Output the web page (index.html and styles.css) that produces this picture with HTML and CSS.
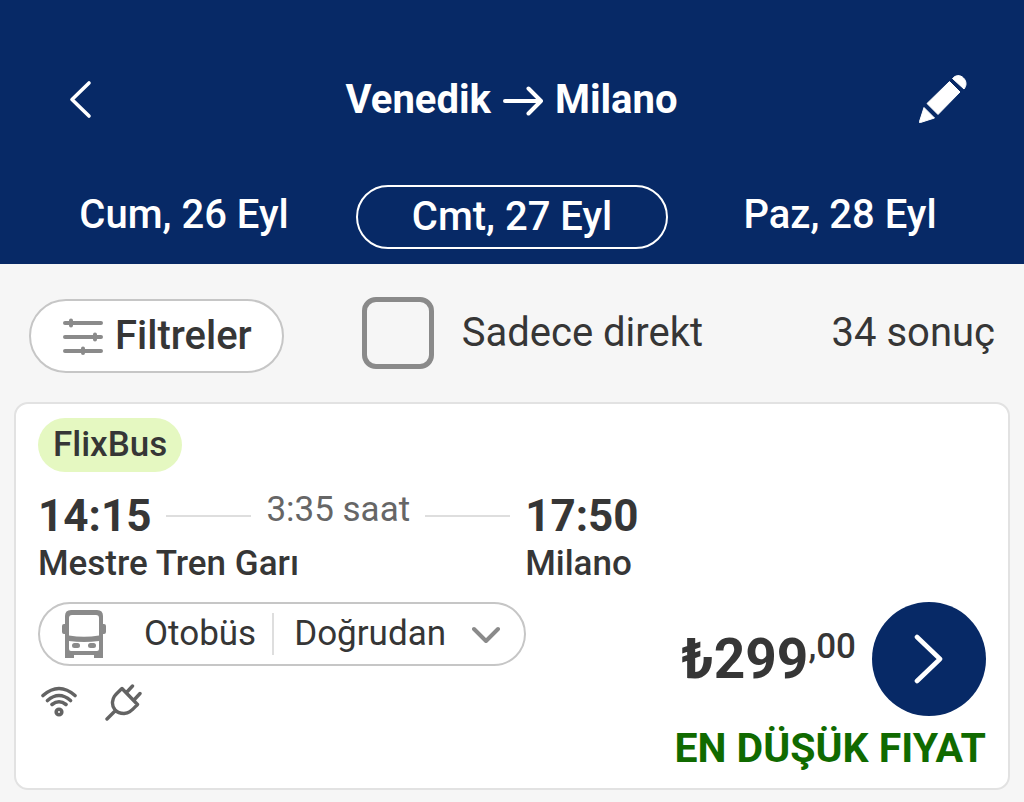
FILE: index.html
```html
<!DOCTYPE html>
<html lang="tr">
<head>
<meta charset="utf-8">
<meta name="viewport" content="width=device-width, initial-scale=1">
<title>Venedik → Milano</title>
<link rel="stylesheet" href="styles.css">
</head>
<body>
<header class="header">
  <div class="header-bar">
    <button class="icon-button" type="button" aria-label="Geri">
      <svg width="24" height="40" viewBox="0 0 24 40" fill="none" stroke="currentColor" stroke-width="3.6" stroke-linecap="round" stroke-linejoin="round"><path d="M20 4 3 20.500 20 37"/></svg>
    </button>
    <h1 class="route">
      <span>Venedik</span>
      <svg class="route-arrow" width="40" height="30" viewBox="0 0 40 30" fill="none" stroke="currentColor" stroke-width="4" stroke-linecap="round" stroke-linejoin="round"><path d="M2 15H38M25.500 2.500 38 15 25.500 27.500"/></svg>
      <span>Milano</span>
    </h1>
    <button class="icon-button icon-button-end" type="button" aria-label="Düzenle">
      <svg width="50" height="50" viewBox="0 0 50 50" fill="currentColor" stroke="currentColor" stroke-width="1" stroke-linejoin="round"><path d="M31.500 7.500 42 18 20 40.500 9 29.500ZM34.500 4.500C37.500 1 42 .5 45.500 4 49 7.500 48.500 12 46 15ZM6 33.500 16.500 44 2.500 48.500Q1 49 1.500 47.500Z"/></svg>
    </button>
  </div>
  <nav class="dates">
    <a class="date" href="#">Cum, 26 Eyl</a>
    <a class="date date-current" href="#" aria-current="date">Cmt, 27 Eyl</a>
    <a class="date" href="#">Paz, 28 Eyl</a>
  </nav>
</header>
<main>
  <div class="toolbar">
    <button class="filters" type="button">
      <svg width="40" height="38" viewBox="0 0 40 38" fill="none" stroke="#8a8a8a" stroke-width="4" stroke-linecap="round"><path d="M2 6H38M2 20H38M2 34H38M8 3.500V8.500M32 17.500V22.500M20 31.500V36"/></svg>
      <span>Filtreler</span>
    </button>
    <label class="direct">
      <input class="direct-box" type="checkbox">
      <span>Sadece direkt</span>
    </label>
    <p class="count">34 sonuç</p>
  </div>
  <article class="card">
    <span class="operator">FlixBus</span>
    <div class="journey">
      <time class="time">14:15</time>
      <span class="line"></span>
      <span class="duration">3:35 saat</span>
      <span class="line"></span>
      <time class="time">17:50</time>
      <span class="station station-from">Mestre Tren Garı</span>
      <span class="station">Milano</span>
    </div>
    <div class="details">
      <div class="service">
        <button class="mode" type="button">
          <svg class="bus" width="44" height="48" viewBox="0 0 44 48" fill="#8a8a8a"><path fill-rule="evenodd" d="M9 0H35Q41 0 41 6V14H42Q44 14 44 16V22Q44 24 42 24H41V48H32V45H12V48H3V24H2Q0 24 0 22V16Q0 14 2 14H3V6Q3 0 9 0ZM10 5Q7 5 7 8V25.500Q22 28 37 25.500V8Q37 5 34 5ZM7 31V39Q7 41 9 41H35Q37 41 37 39V31Q22 33 7 31Z"/><rect x="10" y="33" width="8" height="5" rx="2.500"/><rect x="26" y="33" width="8" height="5" rx="2.500"/></svg>
          <span class="mode-name">Otobüs</span>
          <span class="mode-type">Doğrudan</span>
          <svg width="28" height="18" viewBox="0 0 28 18" fill="none" stroke="#8a8a8a" stroke-width="4" stroke-linecap="round" stroke-linejoin="round"><path d="M2 4 14 16 26 4"/></svg>
        </button>
        <div class="amenities">
          <svg width="38" height="36" viewBox="0 0 38 36" fill="none" stroke="#636363" stroke-width="3.600" stroke-linecap="round" role="img" aria-label="Wi-Fi"><path d="M3 11.500Q19-2.500 35 11.500M7.500 16.500Q19 6.500 30.500 16.500M12 20.500Q19 15 26 20.500"/><circle cx="19" cy="28" r="2.800"/></svg>
          <svg width="38" height="38" viewBox="0 0 38 38" fill="none" stroke="#636363" stroke-width="3.400" stroke-linecap="round" stroke-linejoin="round" role="img" aria-label="Priz"><path d="M3 35 11 27M18 4.500 33.500 20.500C27 27 25.500 29 20 29.500 12 29.500 8 24 8.500 18 9 12 12 10.500 18 4.500ZM22.500 8.500 28.500 2M30 16 36 9.500"/></svg>
        </div>
      </div>
      <div class="offer">
        <div class="buy">
          <strong class="price">₺299<sup class="cents">,00</sup></strong>
          <button class="go" type="button" aria-label="Seç">
            <svg width="30" height="50" viewBox="0 0 30 50" fill="none" stroke="currentColor" stroke-width="4.600" stroke-linecap="round" stroke-linejoin="round"><path d="M3 3 26 25 3 47"/></svg>
          </button>
        </div>
        <p class="lowest">EN DÜŞÜK FIYAT</p>
      </div>
    </div>
  </article>
</main>
</body>
</html>
```
FILE: styles.css
```css
* {
  box-sizing: border-box;
}

body {
  margin: 0;
  background: #f6f6f6;
  color: #363636;
  font-family: Roboto, "Liberation Sans", sans-serif;
  font-size: 40px;
  line-height: 48px;
}

button {
  margin: 0;
  padding: 0;
  border: 0;
  background: none;
  color: inherit;
  font: inherit;
  cursor: pointer;
}

svg {
  display: block;
  flex: none;
}

p {
  margin: 0;
}

.header {
  padding: 65px 20px 15px;
  background: #072966;
  color: #fff;
}

.header-bar {
  display: grid;
  grid-template-columns: 64px 1fr 64px;
  align-items: center;
  height: 68px;
  padding: 0 36px 0 49px;
}

.icon-button {
  display: flex;
  align-items: center;
  height: 68px;
}

.icon-button-end {
  justify-content: flex-end;
}

.route {
  display: flex;
  align-items: center;
  justify-content: center;
  gap: 12px;
  margin: 0;
  padding: 2px 14px 0 0;
  font-size: 40px;
  font-weight: 700;
}

.route-arrow {
  margin-top: 2px;
}

.dates {
  display: grid;
  grid-template-columns: repeat(3, 1fr);
  margin-top: 52px;
}

.date {
  display: flex;
  align-items: center;
  justify-content: center;
  height: 64px;
  margin: 0 8px;
  padding-bottom: 4px;
  color: inherit;
  font-weight: 500;
  text-decoration: none;
}

.date-current {
  padding-bottom: 0;
  border: 2px solid #fff;
  border-radius: 32px;
}

.toolbar {
  display: flex;
  align-items: flex-start;
  padding: 33px 29px 29px;
}

.filters {
  display: flex;
  align-items: center;
  gap: 12px;
  height: 74px;
  margin-top: 2px;
  padding: 0 30px 0 32px;
  border: 2px solid #c6c6c6;
  border-radius: 37px;
  background: #fff;
  font-weight: 500;
}

.direct {
  display: flex;
  align-items: center;
  gap: 28px;
  margin-left: 78px;
}

.direct-box {
  appearance: none;
  width: 72px;
  height: 72px;
  margin: 0;
  border: 5px solid #8a8a8a;
  border-radius: 14px;
}

.direct-box:checked {
  background: #072966;
}

.count {
  margin-left: auto;
  line-height: 72px;
}

.card {
  display: flex;
  flex-direction: column;
  align-items: stretch;
  margin: 0 14px 12px;
  padding: 14px 22px 16px;
  border: 2px solid #e2e2e2;
  border-radius: 14px;
  background: #fff;
  font-size: 35px;
}

.operator {
  align-self: flex-start;
  padding: 0 15px;
  border-radius: 27px;
  background: #e5f8c1;
  font-weight: 500;
  line-height: 54px;
}

.journey {
  display: grid;
  grid-template-columns: repeat(5, max-content);
  align-items: center;
  column-gap: 15px;
  margin-top: 20px;
}

.time {
  font-size: 44px;
  font-weight: 700;
}

.line {
  width: 85px;
  height: 2px;
  background: #dedede;
}

.duration {
  padding-bottom: 12px;
  color: #666;
  line-height: 36px;
}

.station {
  font-weight: 500;
}

.station-from {
  grid-column: span 4;
}

.details {
  display: flex;
  justify-content: space-between;
  margin-top: 14px;
}

.mode {
  display: flex;
  align-items: center;
  height: 64px;
  padding: 0 24px 0 22px;
  border: 2px solid #c6c6c6;
  border-radius: 32px;
}

.bus {
  margin-right: 38px;
}

.mode-name {
  padding-right: 16px;
  border-right: 2px solid #dedede;
  line-height: 42px;
}

.mode-type {
  padding: 0 26px 0 20px;
  line-height: 42px;
}

.amenities {
  display: flex;
  gap: 26px;
  margin: 18px 2px 0;
}

.buy {
  display: flex;
  align-items: center;
  justify-content: flex-end;
  gap: 16px;
}

.price {
  font-size: 55px;
  font-weight: 700;
  line-height: 64px;
}

.cents {
  font-size: 35px;
  font-weight: 500;
  line-height: 1;
  vertical-align: 20px;
}

.go {
  display: flex;
  align-items: center;
  justify-content: center;
  width: 114px;
  height: 114px;
  border-radius: 50%;
  background: #072966;
  color: #fff;
}

.lowest {
  margin-top: 8px;
  color: #106a00;
  font-size: 41px;
  font-weight: 700;
  text-align: right;
}
```
